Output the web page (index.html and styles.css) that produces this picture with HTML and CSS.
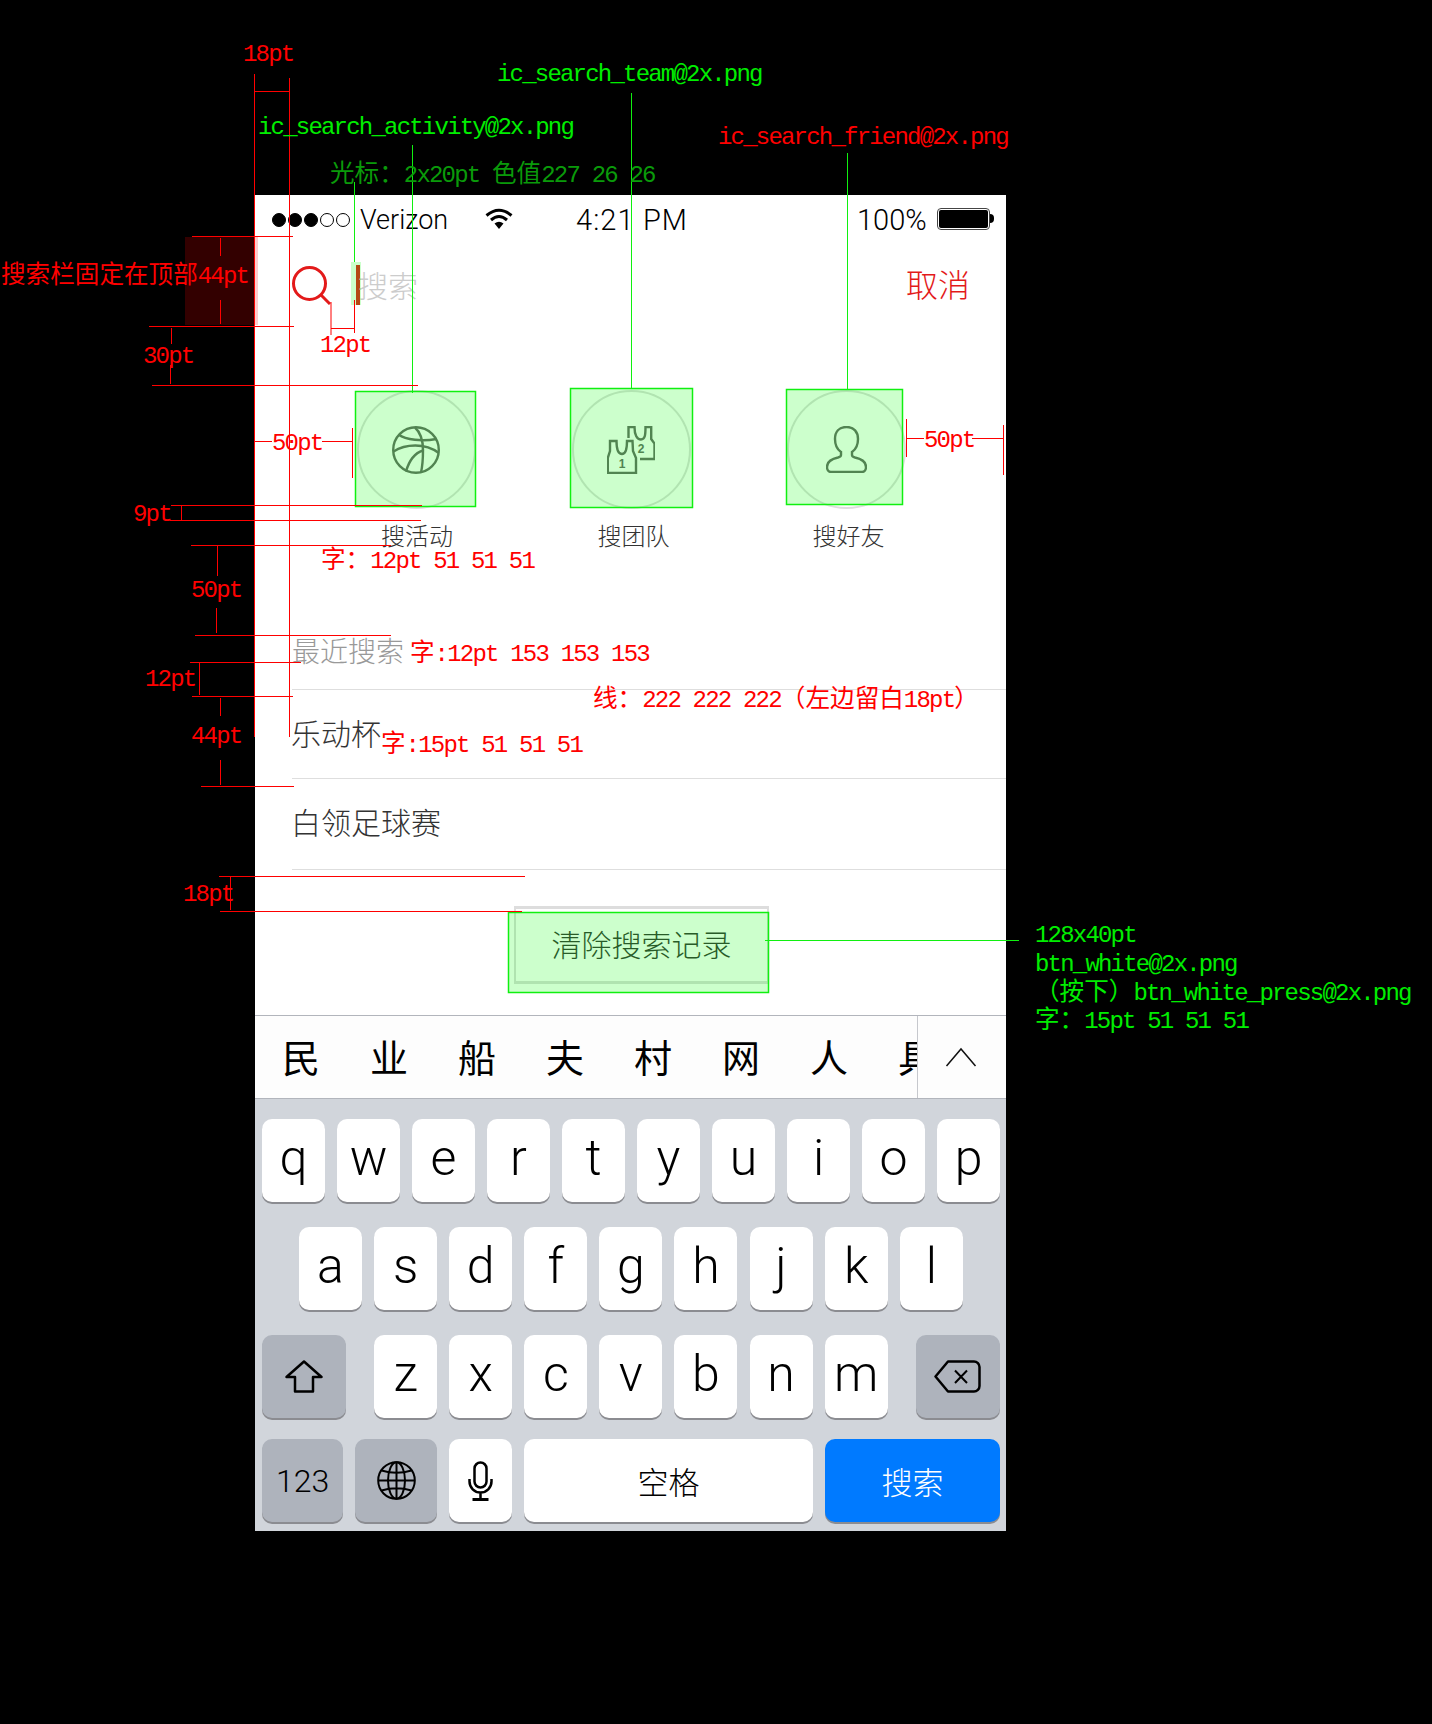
FILE: index.html
```html
<!DOCTYPE html>
<html lang="zh-CN">
<head>
    <meta charset="UTF-8">
    <meta name="viewport" content="width=device-width, initial-scale=1.0">
    <title>搜索页标注</title>
    <link rel="stylesheet" href="styles.css">
</head>
<body>
    <div class="phone">
        <div class="status-bar">
            <div class="signal">
                <span class="dot on"></span><span class="dot on"></span><span class="dot on"></span><span class="dot"></span><span class="dot"></span>
            </div>
            <span class="carrier">Verizon</span>
            <svg class="wifi" viewBox="0 0 28 21" width="28" height="21">
                <path d="M1.500 7.500Q14 -3 26.500 7.500" fill="none" stroke="#000" stroke-width="3"/>
                <path d="M6 12Q14 5 22 12" fill="none" stroke="#000" stroke-width="3"/>
                <path d="M9.500 15.500Q14 12 18.500 15.500L14 21Z" fill="#000"/>
            </svg>
            <span class="clock">4:21 PM</span>
            <span class="percent">100%</span>
            <div class="battery"><div class="battery-fill"></div></div>
            <div class="battery-nub"></div>
        </div>

        <div class="search-bar">
            <svg class="search-icon" viewBox="0 0 39 39" width="39" height="39">
                <circle cx="17.500" cy="17.500" r="16" fill="none" stroke="#e31a1a" stroke-width="3"/>
                <path d="M29 29L38 38" stroke="#e31a1a" stroke-width="3"/>
            </svg>
            <div class="cursor"></div>
            <span class="placeholder">搜索</span>
            <span class="cancel">取消</span>
        </div>

        <div class="quick-row">
            <div class="quick-item">
                <div class="quick-circle">
                    <svg viewBox="0 0 48 48" width="48" height="48" class="quick-icon">
                        <circle cx="24" cy="24" r="22.800"/>
                        <path d="M6.500 8.500C14 14 30 15.500 44.500 13"/>
                        <path d="M23 1.500C29 7 31 14 31 24C31 33 30.500 40 29 46.500"/>
                        <path d="M1.500 25.500C13 18 33 16.500 46.800 27"/>
                        <path d="M14 45.500C17 35 23 27 31 24.500"/>
                    </svg>
                </div>
                <span class="quick-label">搜活动</span>
            </div>
            <div class="quick-item">
                <div class="quick-circle">
                    <svg viewBox="0 0 48 48" width="48" height="48" class="quick-icon">
                        <path d="M21.500 12V1H27.500C27.500 9 30 13.500 34 13.500C38 13.500 38.500 9 38.500 1H44.200V13L47.500 17.500V33H33"/>
                        <path d="M3 15H9.500C9.500 24 12 28 15 28C18 28 20 24 20 15H25.500L26 25L29 32V47H0.800V32L3 25Z"/>
                        <text x="15" y="42" class="jersey-num">1</text>
                        <text x="34" y="27" class="jersey-num">2</text>
                    </svg>
                </div>
                <span class="quick-label shifted">搜团队</span>
            </div>
            <div class="quick-item">
                <div class="quick-circle">
                    <svg viewBox="0 0 41 47" width="41" height="47" class="quick-icon">
                        <path d="M20.500 1C13 1 9 6 9 13C9 20 12 24 15 26V29C15 30 14 31 12 31.500C5 33 1 36 1 41C1 44 3 46 5 46H36C38 46 40 44 40 41C40 36 36 33 29 31.500C27 31 26 30 26 29V26C29 24 32 20 32 13C32 6 28 1 20.500 1Z"/>
                    </svg>
                </div>
                <span class="quick-label shifted">搜好友</span>
            </div>
        </div>

        <div class="recent-title">最近搜索</div>
        <div class="recent-list">
            <div class="recent-item">乐动杯</div>
            <div class="recent-item">白领足球赛</div>
        </div>
        <button class="clear-btn">清除搜索记录</button>

        <div class="candidates">
            <div class="candidate-list">
                <span>民</span><span>业</span><span>船</span><span>夫</span><span>村</span><span>网</span><span>人</span><span>具</span>
            </div>
            <div class="candidate-toggle">
                <svg viewBox="0 0 32 20" width="32" height="20">
                    <path d="M1.500 19L16 2L30.500 19" fill="none" stroke="#111" stroke-width="1.500"/>
                </svg>
            </div>
        </div>

        <div class="keyboard">
            <div class="key-row">
                <div class="key">q</div><div class="key">w</div><div class="key">e</div><div class="key">r</div><div class="key">t</div><div class="key">y</div><div class="key">u</div><div class="key">i</div><div class="key">o</div><div class="key">p</div>
            </div>
            <div class="key-row row-home">
                <div class="key">a</div><div class="key">s</div><div class="key">d</div><div class="key">f</div><div class="key">g</div><div class="key">h</div><div class="key">j</div><div class="key">k</div><div class="key">l</div>
            </div>
            <div class="key-row row-lower">
                <div class="key fn shift">
                    <svg viewBox="0 0 38 33" width="38" height="33">
                        <path d="M19 1.500L36.500 17H28V31.500H10V17H1.500Z" fill="none" stroke="#000" stroke-width="2.500" stroke-linejoin="round"/>
                    </svg>
                </div>
                <div class="key">z</div><div class="key">x</div><div class="key">c</div><div class="key">v</div><div class="key">b</div><div class="key">n</div><div class="key">m</div>
                <div class="key fn backspace">
                    <svg viewBox="0 0 47 33" width="47" height="33">
                        <path d="M14 1.500H40A5.500 5.500 0 0 1 45.500 7V26A5.500 5.500 0 0 1 40 31.500H14L1.500 16.500Z" fill="none" stroke="#000" stroke-width="2.500" stroke-linejoin="round"/>
                        <path d="M21 10.500L33 23M33 10.500L21 23" stroke="#000" stroke-width="2"/>
                    </svg>
                </div>
            </div>
            <div class="key-row row-bottom">
                <div class="key fn num">123</div>
                <div class="key fn globe">
                    <svg viewBox="0 0 39 39" width="39" height="39" fill="none" stroke="#000" stroke-width="2">
                        <circle cx="19.500" cy="19.500" r="18.300"/>
                        <ellipse cx="19.500" cy="19.500" rx="8.500" ry="18.300"/>
                        <path d="M19.500 1V38M1.500 19.500H37.500M4.500 9.500Q19.500 14 34.500 9.500M4.500 29.500Q19.500 25 34.500 29.500"/>
                    </svg>
                </div>
                <div class="key mic">
                    <svg viewBox="0 0 25 40" width="25" height="40" fill="none" stroke="#000" stroke-width="2.500">
                        <rect x="6.500" y="1.500" width="12" height="25" rx="6"/>
                        <path d="M1.500 18V20.500A11 11 0 0 0 23.500 20.500V18M12.500 31.500V38"/>
                        <path d="M4.500 38.500H20.500" stroke-width="3"/>
                    </svg>
                </div>
                <div class="key space">空格</div>
                <div class="key go">搜索</div>
            </div>
        </div>
    </div>

    <!-- annotations drawn on top of the screen -->
    <svg class="notes" viewBox="0 0 1432 1724" width="1432" height="1724">
        <rect class="tint-red" x="185" y="237" width="73" height="88"/>
        <rect class="tint-green" x="351" y="262" width="10" height="43"/>
        <rect class="box-green" x="355.500" y="391.500" width="120" height="115"/>
        <rect class="box-green" x="570.500" y="388.500" width="122" height="119"/>
        <rect class="box-green" x="786.500" y="389.500" width="116" height="115"/>
        <rect class="box-green" x="508.500" y="912.500" width="260" height="80"/>

        <g class="lines-green">
            <path d="M412.500 145V393M631.500 93V389M847.500 153V389M354.500 182V262M765 940.500H1019"/>
        </g>
        <g class="lines-red">
            <path d="M254.500 74V737M289.500 78V737M254 91.500H289"/>
            <path d="M192 236.500H293M149 326.500H294M220.500 238V256M220.500 300V324"/>
            <path d="M171.500 328V344M170.500 365V384M152 385.500H418"/>
            <path d="M331 302V335M354.500 300V333M331 328.500H354"/>
            <path d="M255 441.500H272M322 441.500H352M352.500 428V478"/>
            <path d="M906 438.500H924M972 438.500H1003M906.500 419V457M1003.500 425V475"/>
            <path d="M171 505.500H422M170 520.500H421M181.500 505V520"/>
            <path d="M191 545.500H391M217.500 545V576M216.500 608V633M195 635.500H391"/>
            <path d="M190 662.500H301M199.500 662V695M192 696.500H293"/>
            <path d="M220.500 698V716M220.500 760V785M201 786.500H294"/>
            <path d="M219 876.500H525M220 911.500H522M230.500 877V910"/>
        </g>

        <text class="note red" x="243" y="61">18pt</text>
        <text class="note green" x="497" y="81">ic_search_team@2x.png</text>
        <text class="note green" x="258" y="134">ic_search_activity@2x.png</text>
        <text class="note red" x="718" y="144">ic_search_friend@2x.png</text>
        <text class="note dim" x="330" y="182"><tspan class="cn">光标：</tspan>2x20pt <tspan class="cn">色值</tspan>227 26 26</text>
        <text class="note red" x="1" y="283"><tspan class="cn">搜索栏固定在顶部</tspan>44pt</text>
        <text class="note red" x="320" y="352">12pt</text>
        <text class="note red" x="143" y="363">30pt</text>
        <text class="note red" x="272" y="450">50pt</text>
        <text class="note red" x="924" y="447">50pt</text>
        <text class="note red" x="133" y="521">9pt</text>
        <text class="note red" x="321" y="568"><tspan class="cn">字：</tspan>12pt 51 51 51</text>
        <text class="note red" x="191" y="597">50pt</text>
        <text class="note red" x="410" y="661"><tspan class="cn">字</tspan>:12pt 153 153 153</text>
        <text class="note red" x="145" y="686">12pt</text>
        <text class="note red" x="593" y="707"><tspan class="cn">线：</tspan>222 222 222<tspan class="cn">（左边留白</tspan>18pt<tspan class="cn">）</tspan></text>
        <text class="note red" x="191" y="743">44pt</text>
        <text class="note red" x="381" y="752"><tspan class="cn">字</tspan>:15pt 51 51 51</text>
        <text class="note red" x="183" y="901">18pt</text>
        <text class="note green" x="1035" y="942">128x40pt</text>
        <text class="note green" x="1035" y="971">btn_white@2x.png</text>
        <text class="note green" x="1035" y="1000"><tspan class="cn">（按下）</tspan>btn_white_press@2x.png</text>
        <text class="note green" x="1035" y="1028"><tspan class="cn">字：</tspan>15pt 51 51 51</text>
    </svg>
</body>
</html>
```

FILE: styles.css
```css
html, body {
    margin: 0;
    padding: 0;
    background-color: #000;
}

body {
    position: relative;
    width: 1432px;
    height: 1724px;
    overflow: hidden;
    padding-top: 195px;
    box-sizing: border-box;
    font-family: "Liberation Sans", "Noto Sans CJK SC", sans-serif;
}

.phone {
    width: 751px;
    height: 1336px;
    margin-left: 255px;
    background-color: #fff;
    color: #333;
    display: flex;
    flex-direction: column;
    overflow: hidden;
}

/* status bar */
.status-bar {
    height: 42px;
    display: flex;
    align-items: flex-start;
    padding: 12px 0 0 17px;
    box-sizing: border-box;
    color: #000;
    font-family: Roboto, "Liberation Sans", sans-serif;
    font-weight: 300;
    font-size: 27px;
    line-height: 26px;
    flex-shrink: 0;
    overflow: visible;
}

.signal {
    display: flex;
    gap: 2px;
    width: 88px;
    padding-top: 6px;
}

.dot {
    width: 14px;
    height: 14px;
    box-sizing: border-box;
    border: 1.5px solid #000;
    border-radius: 50%;
}

.dot.on {
    background-color: #000;
}

.carrier {
    width: 125px;
}

.wifi {
    margin-top: 1px;
    margin-right: 63px;
}

.clock {
    width: 281px;
    font-size: 29px;
    letter-spacing: 1.1px;
}

.percent {
    width: 80px;
    font-size: 29px;
}

.battery {
    width: 53px;
    height: 22px;
    margin-top: 1px;
    box-sizing: border-box;
    border: 1.5px solid #444;
    border-radius: 4px;
    padding: 1px;
}

.battery-fill {
    height: 100%;
    background-color: #000;
    border-radius: 2px;
}

.battery-nub {
    width: 4px;
    height: 9px;
    margin-top: 7px;
    background-color: #000;
    border-radius: 0 4px 4px 0;
}

/* search bar */
.search-bar {
    height: 88px;
    flex-shrink: 0;
    display: flex;
    align-items: center;
    box-sizing: border-box;
    padding: 8px 36px 0 37px;
}

.search-icon {
    margin-right: 25px;
}

.cursor {
    width: 4px;
    height: 40px;
    background-color: #e31a1a;
}

.placeholder {
    font-size: 30px;
    color: #ccc;
    font-weight: 300;
    margin: 0 0 3px -2px;
}

.cancel {
    margin: 0 0 4px auto;
    font-size: 32px;
    color: #e31a1a;
    font-weight: 300;
}

/* quick entries */
.quick-row {
    margin-top: 65px;
    padding-left: 53.500px;
    display: grid;
    grid-template-columns: repeat(3, 215px);
}

.quick-item {
    display: flex;
    flex-direction: column;
    align-items: center;
    width: 215px;
}

.quick-circle {
    width: 119px;
    height: 119px;
    margin-bottom: -1px;
    box-sizing: border-box;
    border: 2px solid #dedede;
    border-radius: 50%;
    display: flex;
    align-items: center;
    justify-content: center;
}

.quick-icon {
    fill: none;
    stroke: #666;
    stroke-width: 2.400;
}

.jersey-num {
    fill: #666;
    stroke: none;
    font-size: 12px;
    font-weight: 700;
    text-anchor: middle;
    font-family: "Liberation Sans", sans-serif;
}

.quick-label {
    margin: 15px 0 0 2px;
    font-size: 24px;
    line-height: 28px;
    font-weight: 300;
}

.quick-label.shifted {
    margin-left: 5px;
}

/* recent searches */
.recent-title {
    margin: 84px 0 0 37px;
    font-size: 28px;
    line-height: 36px;
    height: 54px;
    color: #999;
    font-weight: 300;
}

.recent-list {
    margin-left: 37px;
    border-top: 1px solid #dedede;
}

.recent-item {
    height: 89px;
    box-sizing: border-box;
    border-bottom: 1px solid #dedede;
    font-size: 30px;
    line-height: 89px;
    font-weight: 300;
    text-indent: -1px;
}

.recent-item:last-child {
    height: 91px;
    line-height: 90px;
}

.clear-btn {
    width: 255px;
    height: 78px;
    margin: 36px 0 0 259px;
    padding: 0 0 4px;
    box-sizing: border-box;
    background-color: #fff;
    border: 2px solid #ddd;
    border-width: 3px 2px;
    font-family: inherit;
    font-size: 30px;
    font-weight: 300;
    color: #333;
    flex-shrink: 0;
}

/* candidate bar */
.candidates {
    margin-top: 31px;
    height: 84px;
    flex-shrink: 0;
    box-sizing: border-box;
    border-top: 1px solid #b2b5bc;
    border-bottom: 1px solid #b2b5bc;
    background-color: #fdfdfd;
    display: flex;
}

.candidate-list {
    width: 662px;
    padding: 0 0 4px 27px;
    box-sizing: border-box;
    display: flex;
    gap: 50px;
    overflow: hidden;
    align-items: center;
    font-size: 38px;
    color: #000;
    white-space: nowrap;
}

.candidate-list span {
    flex-shrink: 0;
}

.candidate-toggle {
    flex: 1;
    border-left: 1px solid #c6c8cd;
    display: flex;
    align-items: center;
    justify-content: center;
    padding-right: 2px;
}

/* keyboard */
.keyboard {
    flex: 1;
    background-color: #d1d5db;
    padding: 20px 0 0 7px;
    display: flex;
    flex-direction: column;
    gap: 25px;
    font-family: Roboto, "Liberation Sans", "Noto Sans CJK SC", sans-serif;
    font-weight: 300;
}

.key-row {
    display: flex;
    gap: 12px;
    height: 83px;
}

.row-home {
    padding-left: 37px;
    gap: 12.100px;
}

.row-lower {
    gap: 12.100px;
}

.row-bottom {
    margin-top: -4px;
}

.key {
    width: 63px;
    height: 83px;
    box-sizing: border-box;
    background-color: #fff;
    border-radius: 10px;
    box-shadow: 0 2px 0 #8b8c91;
    color: #000;
    font-size: 50px;
    display: flex;
    align-items: center;
    justify-content: center;
    padding-bottom: 6px;
    flex-shrink: 0;
}

.key.fn {
    background-color: #aeb3bc;
    padding-bottom: 0;
}

.shift {
    width: 84px;
    margin-right: 16px;
}

.backspace {
    width: 84px;
    margin-left: 16px;
}

.num {
    width: 81px;
    font-size: 32px;
}

.globe {
    width: 82px;
}

.mic {
    padding-bottom: 0;
}

.space {
    width: 289px;
    font-size: 31px;
    padding-bottom: 0;
}

.go {
    width: 175px;
    background-color: #007aff;
    color: #fff;
    font-size: 31px;
    padding-bottom: 0;
}

/* annotation layer */
.notes {
    position: absolute;
    left: 0;
    top: 0;
    pointer-events: none;
}

.tint-red {
    fill: rgba(255, 0, 0, 0.2);
}

.tint-green {
    fill: rgba(0, 255, 0, 0.2);
}

.box-green {
    fill: rgba(0, 255, 0, 0.2);
    stroke: #10f010;
    stroke-width: 1.500;
}

.lines-green path {
    fill: none;
    stroke: #10f010;
    stroke-width: 1;
}

.lines-red path {
    fill: none;
    stroke: #f00;
    stroke-width: 1;
}

.note {
    font-family: "Liberation Mono", "Noto Sans CJK SC", monospace;
    font-size: 24px;
    letter-spacing: -1.800px;
}

.note .cn {
    font-family: "Noto Sans CJK SC", sans-serif;
    font-size: 24.600px;
    letter-spacing: 0;
}

.note.red {
    fill: #f00;
}

.note.green {
    fill: #00ee00;
}

.note.dim {
    fill: #0a9a0a;
}
```
